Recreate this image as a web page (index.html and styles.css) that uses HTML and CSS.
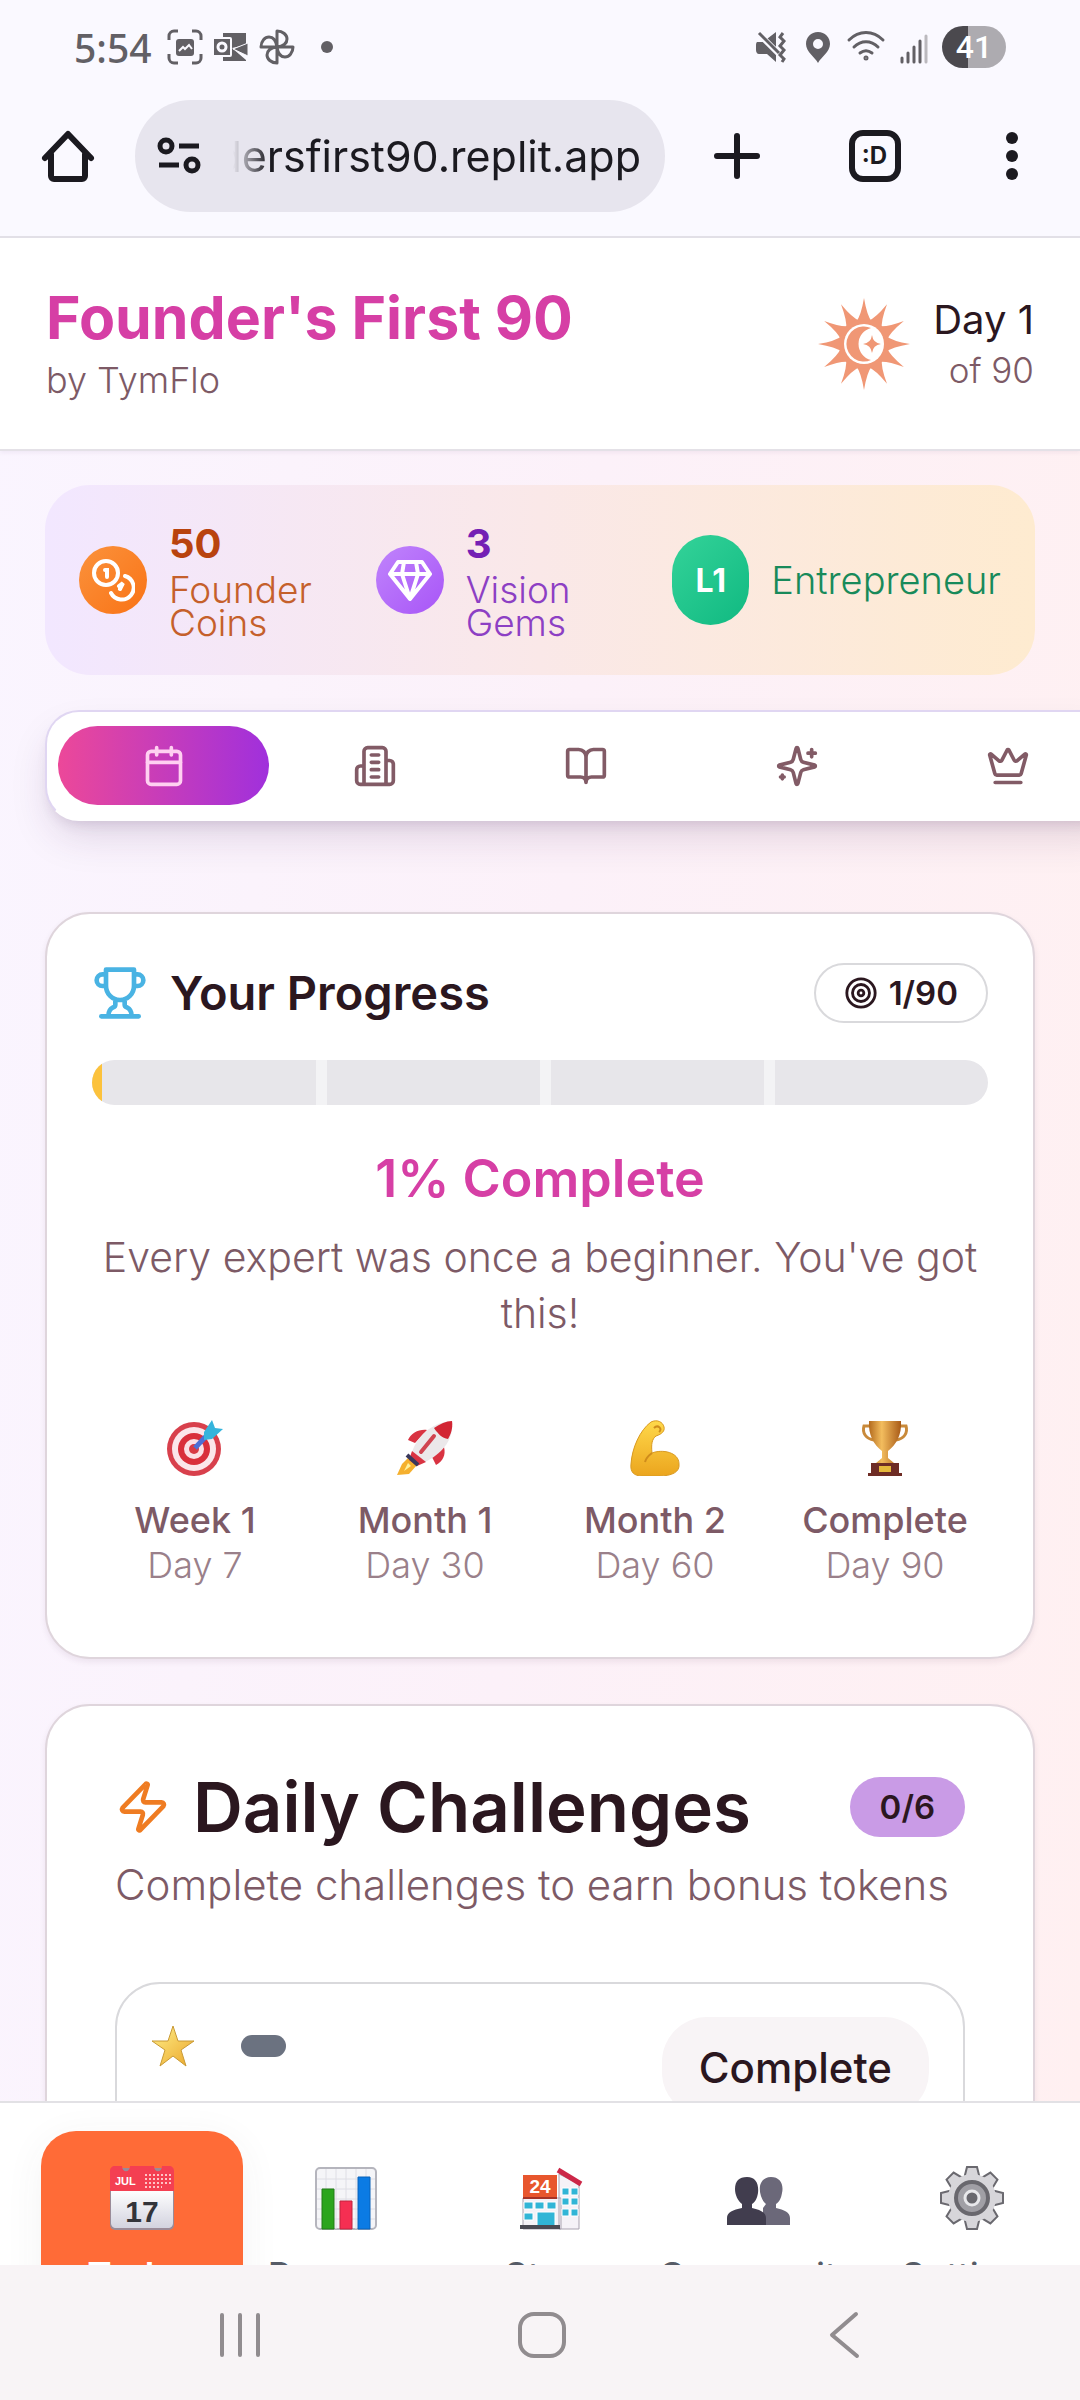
FILE: index.html
```html
<!DOCTYPE html>
<html lang="en">
<head>
<meta charset="utf-8">
<meta name="viewport" content="width=device-width, initial-scale=1">
<title>Founder's First 90</title>
<link rel="stylesheet" href="styles.css">
</head>
<body>
<div class="device">
  <div class="status">
    <div class="status-side">
      <span class="clock">5:54</span>
      <svg class="s-icon" viewBox="0 0 36 36" fill="none" stroke="#626065" stroke-width="3"><path d="M2 11V7a5 5 0 0 1 5-5h4M25 2h4a5 5 0 0 1 5 5v4M34 25v4a5 5 0 0 1-5 5h-4M11 34H7a5 5 0 0 1-5-5v-4"/><rect x="9" y="10" width="18" height="17" rx="3" fill="#626065" stroke="none"/><path d="m12 22 4-4 2 2 4-4 3 4" stroke="#faf9ff" stroke-width="2"/></svg>
      <svg class="s-icon" viewBox="0 0 36 36" fill="#626065"><path d="M10 4h23v12l-14 3 14 12v1H10z"/><path d="m20 20 15-6v13z" stroke="#faf9ff" stroke-width="1"/><rect x="0" y="9" width="18" height="18" rx="1" stroke="#faf9ff" stroke-width="2"/><circle cx="9" cy="18" r="4" fill="none" stroke="#faf9ff" stroke-width="3"/></svg>
      <svg class="s-icon" viewBox="0 0 36 36" fill="none" stroke="#626065" stroke-width="3" stroke-linejoin="round"><path d="M18 18V2c6 0 10 4 10 8s-3 7-10 8h16c0 6-4 10-8 10s-7-3-8-10v16c-6 0-10-4-10-8s3-7 10-8H2c0-6 4-10 8-10s7 3 8 10z"/></svg>
      <span class="dot"></span>
    </div>
    <div class="status-side">
      <svg class="s-icon" viewBox="0 0 36 36"><path fill="#626065" d="M3 13h6l13-10v30l-9-8H5c-2 0-3-2-3-4v-4c0-2 0-3 1-4z"/><path d="m3 3 24 24" stroke="#faf9ff" stroke-width="6"/><path d="m5 4 20 20M29 4l-3 4 4 4-4 5 4 4-4 5 4 4-2 3" fill="none" stroke="#626065" stroke-width="3"/></svg>
      <svg class="s-icon" viewBox="0 0 36 36"><path fill="#626065" fill-rule="evenodd" d="M18 3c7 0 12 5 12 12 0 8-9 13-12 19C15 28 6 23 6 15 6 8 11 3 18 3zm0 7a5 5 0 1 0 0 10 5 5 0 0 0 0-10z"/></svg>
      <svg class="s-icon wide" viewBox="0 0 40 36" fill="none" stroke="#626065" stroke-width="3" stroke-linecap="round"><path d="M3 11c10-10 24-10 34 0M8 18c7-7 17-7 24 0M14 24c4-3 8-3 12 0"/><circle cx="20" cy="29" r="1"/></svg>
      <svg class="s-icon" viewBox="0 0 36 36" stroke="#626065" stroke-width="3" stroke-linecap="round"><path d="M6 29v4M12 24v9M18 18v15M24 12v21"/><path d="M30 7v26" stroke="#bbb9be"/></svg>
      <span class="battery">41</span>
    </div>
  </div>
  <div class="toolbar">
    <button class="bar-btn" aria-label="Home"><svg viewBox="0 0 56 56" fill="none" stroke="#1b1a20" stroke-width="6" stroke-linecap="round" stroke-linejoin="round"><path d="M5 30 28 6l23 24M11 26v22a3 3 0 0 0 3 3h28a3 3 0 0 0 3-3V26"/></svg></button>
    <div class="address">
      <svg viewBox="0 0 44 40" fill="none" stroke="#1b1a20" stroke-width="5"><circle cx="9" cy="10" r="6"/><path d="M22 10h20M2 29h20"/><circle cx="35" cy="29" r="6"/></svg>
      <input class="url" aria-label="Address" value="dersfirst90.replit.app" readonly>
    </div>
    <div class="bar-actions">
      <button class="bar-btn" aria-label="New tab"><svg viewBox="0 0 56 56" stroke="#1b1a20" stroke-width="6" stroke-linecap="round"><path d="M28 8v40M8 28h40"/></svg></button>
      <button class="bar-btn" aria-label="Tabs"><span class="tab-count">:D</span></button>
      <button class="bar-btn" aria-label="Menu"><svg viewBox="0 0 56 56" fill="#1b1a20"><circle cx="28" cy="10" r="6"/><circle cx="28" cy="28" r="6"/><circle cx="28" cy="46" r="6"/></svg></button>
    </div>
  </div>

  <div class="app">
    <header class="header">
      <div class="titles">
        <h1 class="brand">Founder's First 90</h1>
        <p class="byline">by TymFlo</p>
      </div>
      <div class="day">
        <svg class="sun" viewBox="-46 -46 92 92" fill="#f09775">
          <g id="ray4"><path id="ray" d="M-8-22Q-3-28 0-46 3-28 8-22z"/><use href="#ray" transform="rotate(30)"/><use href="#ray" transform="rotate(60)"/></g>
          <use href="#ray4" transform="rotate(90)"/><use href="#ray4" transform="rotate(180)"/><use href="#ray4" transform="rotate(270)"/>
          <circle r="25"/><circle r="20" fill="#fff"/>
          <path d="M7-16A17.500 17.500 0 1 0 7 16 16.500 16.500 0 0 1 7-16z"/>
          <path d="M8-9Q9-1 17 0 9 1 8 9 7 1-1 0 7-1 8-9z"/>
        </svg>
        <div class="day-text"><p class="day-now">Day 1</p><p class="day-of">of 90</p></div>
      </div>
    </header>

    <main class="content">
      <section class="stats" aria-label="Rewards">
        <div class="stat coins">
          <span class="stat-icon"><svg viewBox="0 0 44 44" fill="none" stroke="#fff" stroke-width="4" stroke-linecap="round"><circle cx="15" cy="15" r="12"/><path d="M14 12h2v7M34 18a12 12 0 1 1-14 17M28 28l4-3-3 6"/></svg></span>
          <div><p class="stat-num">50</p><p class="stat-label">Founder<br>Coins</p></div>
        </div>
        <div class="stat gems">
          <span class="stat-icon"><svg viewBox="0 0 44 44" fill="none" stroke="#fff" stroke-width="4" stroke-linejoin="round"><path d="M10 4h24l8 12-20 25L2 16zM2 16h40M16 4l-2 12 8 25 8-25-2-12"/></svg></span>
          <div><p class="stat-num">3</p><p class="stat-label">Vision<br>Gems</p></div>
        </div>
        <div class="stat level"><span class="level-badge">L1</span><p class="stat-label">Entrepreneur</p></div>
      </section>

      <nav class="tabs" aria-label="Sections">
        <button class="tab active" aria-label="Calendar"><svg viewBox="0 0 24 24"><path d="M8 2v4M16 2v4M3 10h18"/><rect x="3" y="4" width="18" height="18" rx="2"/></svg></button>
        <button class="tab" aria-label="Business"><svg viewBox="0 0 24 24"><path d="M6 22V4a2 2 0 0 1 2-2h8a2 2 0 0 1 2 2v18ZM6 12H4a2 2 0 0 0-2 2v6a2 2 0 0 0 2 2h2M18 9h2a2 2 0 0 1 2 2v9a2 2 0 0 1-2 2h-2M10 6h4M10 10h4M10 14h4M10 18h4"/></svg></button>
        <button class="tab" aria-label="Library"><svg viewBox="0 0 24 24"><path d="M12 7v14M3 18a1 1 0 0 1-1-1V4a1 1 0 0 1 1-1h5a4 4 0 0 1 4 4 4 4 0 0 1 4-4h5a1 1 0 0 1 1 1v13a1 1 0 0 1-1 1h-6a3 3 0 0 0-3 3 3 3 0 0 0-3-3z"/></svg></button>
        <button class="tab" aria-label="Inspiration"><svg viewBox="0 0 24 24"><path d="M9.937 15.5A2 2 0 0 0 8.5 14.063l-6.135-1.582a.5.5 0 0 1 0-.962L8.5 9.936A2 2 0 0 0 9.937 8.5l1.582-6.135a.5.5 0 0 1 .963 0L14.063 8.5A2 2 0 0 0 15.5 9.937l6.135 1.581a.5.5 0 0 1 0 .964L15.5 14.063a2 2 0 0 0-1.437 1.437l-1.582 6.135a.5.5 0 0 1-.963 0zM20 3v4M22 5h-4M4 17v2M5 18H3"/></svg></button>
        <button class="tab" aria-label="Premium"><svg viewBox="0 0 24 24"><path d="M11.562 3.266a.5.5 0 0 1 .876 0L15.39 8.87a1 1 0 0 0 1.516.294L21.183 5.5a.5.5 0 0 1 .798.519l-2.834 10.246a1 1 0 0 1-.956.734H5.81a1 1 0 0 1-.957-.734L2.02 6.02a.5.5 0 0 1 .798-.519l4.276 3.664a1 1 0 0 0 1.516-.294zM5 21h14"/></svg></button>
      </nav>

      <section class="card progress">
        <div class="row">
          <div class="heading">
            <svg class="line-icon blue" viewBox="0 0 24 24"><path d="M6 9H4.5a2.5 2.5 0 0 1 0-5H6M18 9h1.5a2.5 2.5 0 0 0 0-5H18M4 22h16M10 14.66V17c0 .55-.47.98-.97 1.21C7.85 18.75 7 20.24 7 22M14 14.66V17c0 .55.47.98.97 1.21C16.15 18.75 17 20.24 17 22M18 2H6v7a6 6 0 0 0 12 0V2Z"/></svg>
            <h2 class="title">Your Progress</h2>
          </div>
          <span class="pill outline"><svg viewBox="0 0 24 24"><circle cx="12" cy="12" r="10"/><circle cx="12" cy="12" r="6"/><circle cx="12" cy="12" r="2"/></svg>1/90</span>
        </div>
        <div class="track" role="progressbar" aria-valuenow="1" aria-valuemin="0" aria-valuemax="100" aria-label="Progress"><span class="fill" style="width:1%"></span><i></i><i></i><i></i><i></i></div>
        <p class="percent">1% Complete</p>
        <p class="quote">Every expert was once a beginner. You've got this!</p>
        <ul class="milestones">
          <li>
            <svg class="emoji" viewBox="0 0 56 56"><circle cx="27" cy="29" r="27" fill="#d8404c"/><circle cx="27" cy="29" r="22" fill="#fbe6ea"/><circle cx="27" cy="29" r="16" fill="#d92f3b"/><circle cx="27" cy="29" r="10" fill="#fbe0e5"/><circle cx="27" cy="29" r="5" fill="#d83a45"/><path d="m28 28 15-16" stroke="#4b6fd6" stroke-width="5"/><path fill="#35b4dc" d="m37 12 8-12 3 8 8 1-11 10-8 1z"/></svg>
            <strong>Week 1</strong><span>Day 7</span>
          </li>
          <li>
            <svg class="emoji" viewBox="0 0 56 56"><path fill="#f5b02e" d="m12 37-7 7-5 11 12-1 8-9z"/><path fill="#fff19c" d="m11 43-4 8 7-5z"/><path fill="#d93342" d="M11 20c3-7 11-11 19-10L18 23zM47 27c2 8-1 14-8 18l-4-8z"/><path fill="#ebe8ea" d="M15 32C20 17 33 3 55 1c2 18-9 32-27 41z"/><path fill="#d22634" d="M37 8C43 4 49 1 55 1c1 7-1 13-4 18-6-1-10-5-14-11z"/><path fill="#d93342" d="m15 31 14 11-9 4-8-6z"/><path d="m24 32 13-16" stroke="#d04450" stroke-width="4" stroke-linecap="round"/><path d="m10 35 11 10" stroke="#39385c" stroke-width="4"/></svg>
            <strong>Month 1</strong><span>Day 30</span>
          </li>
          <li>
            <svg class="emoji" viewBox="0 0 56 56"><defs><linearGradient id="skin" x2="0" y2="1"><stop stop-color="#ffd84a"/><stop offset="1" stop-color="#eba51e"/></linearGradient></defs><path fill="url(#skin)" stroke="#d99a22" d="M24 2c6-3 12 0 13 5 1 4-2 7-8 9-4 3-5 8-4 17 10-4 27-1 27 11 1 8-7 12-20 12H15c-8 0-12-4-11-12C5 28 13 10 24 2z"/><path fill="none" stroke="#cf8c1b" stroke-width="2" d="M25 33c-4 3-6 5-7 9M27 8c4-4 9 1 5 4"/></svg>
            <strong>Month 2</strong><span>Day 60</span>
          </li>
          <li>
            <svg class="emoji" viewBox="0 0 56 56"><defs><linearGradient id="cup"><stop stop-color="#b36a1d"/><stop offset=".4" stop-color="#f3bd5e"/><stop offset="1" stop-color="#a85a17"/></linearGradient></defs><path fill="none" stroke="#c98a3a" stroke-width="3" d="M14 6H7c-2 7 2 13 10 14M42 6h7c2 7-2 13-10 14"/><path fill="url(#cup)" d="M12 1h32c1 14-5 24-13 30v7l6 5H19l6-5v-7C17 25 11 15 12 1z"/><path fill="#6e2c25" d="M14 43h28v10h3v3H11v-3h3z"/><path fill="#e5b83b" d="M22 46h12v6H22z"/></svg>
            <strong>Complete</strong><span>Day 90</span>
          </li>
        </ul>
      </section>

      <section class="card challenges">
        <div class="row">
          <div class="heading">
            <svg class="line-icon orange" viewBox="0 0 24 24"><path d="M4 14a1 1 0 0 1-.78-1.63l9.9-10.2a.5.5 0 0 1 .86.46l-1.92 6.02A1 1 0 0 0 13 10h7a1 1 0 0 1 .78 1.63l-9.9 10.2a.5.5 0 0 1-.86-.46l1.92-6.02A1 1 0 0 0 11 14z"/></svg>
            <h2 class="title big">Daily Challenges</h2>
          </div>
          <span class="pill filled">0/6</span>
        </div>
        <p class="subtitle">Complete challenges to earn bonus tokens</p>
        <div class="challenge">
          <div class="marks">
            <svg class="star" viewBox="0 0 44 42"><defs><linearGradient id="gold" x2="1" y2="1"><stop stop-color="#fff08a"/><stop offset="1" stop-color="#eba62a"/></linearGradient></defs><path fill="url(#gold)" stroke="#c99a35" stroke-linejoin="round" d="m22 1 5 15h16L30 25l5 16-13-10L9 41l5-16L1 16h16z"/></svg>
            <span class="tag"></span>
          </div>
          <button class="complete">Complete</button>
        </div>
      </section>
    </main>
  </div>

  <nav class="bottom" aria-label="Main">
    <a class="dest current" href="#today"><svg viewBox="0 0 64 64"><defs><linearGradient id="page" x2="0" y2="1"><stop stop-color="#fff"/><stop offset="1" stop-color="#d3d3df"/></linearGradient></defs><rect y="2" width="64" height="62" rx="5" fill="#9a8b98"/><path fill="url(#page)" d="M1 24h62v33c0 3-2 5-5 5H6c-3 0-5-2-5-5z"/><path fill="#f43f52" d="M0 25V5c0-3 2-5 5-5h7c0 7 8 7 8 0h24c0 7 8 7 8 0h7c3 0 5 2 5 5v20z"/><path d="M35 9h26M35 13h26M35 17h26M35 21h17" stroke="#ffc3c6" stroke-width="2" stroke-dasharray="2 2"/><text x="5" y="19" font-size="11" font-weight="700" fill="#fff">JUL</text><text x="32" y="56" font-size="30" font-weight="700" text-anchor="middle" fill="#33343a">17</text></svg><span>Today</span></a>
    <a class="dest" href="#progress"><svg viewBox="0 0 64 64"><rect x="2" y="2" width="60" height="61" rx="4" fill="#f5f5f8" stroke="#b5b5bd" stroke-width="2"/><path d="M12 3v60M22 3v60M32 3v60M42 3v60M52 3v60M3 13h58M3 23h58M3 33h58M3 43h58M3 53h58" stroke="#dedee5"/><path fill="#2ca51d" stroke="#237a19" d="M8 23h12v40H8z"/><path fill="#f52f52" stroke="#c0243f" d="M26 35h12v28H26z"/><path fill="#0b7be4" stroke="#0a62b8" d="M44 11h12v52H44z"/></svg><span>Progress</span></a>
    <a class="dest" href="#store"><svg viewBox="0 0 64 64"><path fill="#f5f2f7" stroke="#a9a3b0" d="M4 32h38v31H4zM40 8l20 10v45H40z"/><path d="m39 4 23 14" stroke="#cc2748" stroke-width="5"/><path fill="#e8562d" d="M4 9h34v22H4z"/><text x="21" y="27" font-size="19" font-weight="700" text-anchor="middle" fill="#fff">24</text><path d="M4 32h34" stroke="#a63327" stroke-width="2"/><path fill="#31b5d6" stroke="#fff" stroke-width="1" d="M5 36h9v7H5zM16 36h9v7h-9zM28 36h9v7h-9zM5 47h9v7H5zM18 46h18v15H18zM43 22h7v7h-7zM52 22h7v7h-7zM43 32h7v7h-7zM52 32h7v7h-7zM43 43h7v7h-7zM52 43h7v7h-7z"/><path fill="#4a4a53" d="M1 59h40v4H1z"/></svg><span>Store</span></a>
    <a class="dest" href="#community"><svg viewBox="0 0 64 64"><path fill="#6b6879" d="M44 11c9 0 13 7 11 16-1 6-3 9-6 11v4c8 2 14 4 14 10v7H36V42l3-4c-4-3-7-11-6-18 1-5 5-9 11-9z"/><path fill="#413d4e" d="M20 11c9 0 12 7 11 16-1 6-3 9-6 11v4c8 2 14 4 14 10v7H0v-7c0-6 6-8 15-10v-4c-4-3-7-9-7-15 0-8 4-12 12-12z"/></svg><span>Community</span></a>
    <a class="dest" href="#settings"><svg viewBox="-32 -32 64 64"><g fill="#d7d6da" stroke="#6a696f" stroke-width="2"><g id="teeth"><path id="tooth" d="m-7-23 2-8H5l2 8v46l-2 8H-5l-2-8z"/><use href="#tooth" transform="rotate(90)"/></g><use href="#teeth" transform="rotate(45)"/></g><circle r="24" fill="#d7d6da"/><circle r="16" fill="#a09fa5" stroke="#69686e" stroke-width="4"/><circle r="7" fill="#69686e" stroke="#e8e8eb" stroke-width="3"/></svg><span>Settings</span></a>
  </nav>
  <div class="system">
    <button aria-label="Recent apps"><svg viewBox="0 0 48 48"><path d="M6 4v40M24 4v40M42 4v40"/></svg></button>
    <button aria-label="Home screen"><svg viewBox="0 0 48 48"><rect x="2" y="3" width="44" height="42" rx="14"/></svg></button>
    <button aria-label="Back"><svg viewBox="0 0 48 48"><path d="M36 3 12 24l25 21"/></svg></button>
  </div>
</div>
</body>
</html>
```
FILE: styles.css
```css
* { box-sizing: border-box; }
body, h1, h2, p, ul { margin: 0; padding: 0; }
body { font-family: Inter, "Liberation Sans", sans-serif; font-weight: 300; color: #2b171f; }
button { border: 0; padding: 0; background: none; font: inherit; color: inherit; }
svg { display: block; flex: none; }

.device { height: 100vh; display: flex; flex-direction: column; overflow: hidden; }

/* Phone status bar */
.status { flex: none; height: 92px; padding: 2px 74px 0; display: flex; justify-content: space-between; align-items: center; background: #faf9ff; }
.status-side { display: flex; align-items: center; gap: 10px; }
.clock { font-family: "Noto Sans", sans-serif; font-size: 39px; font-weight: 500; color: #626065; margin-right: 5px; }
.s-icon { width: 36px; height: 36px; }
.s-icon.wide { width: 40px; }
.dot { width: 12px; height: 12px; border-radius: 50%; background: #626065; margin-left: 16px; }
.battery { width: 64px; height: 42px; border-radius: 21px; background: linear-gradient(90deg, #4b494e 40%, #adabb0 40%); color: #fff; font: 500 32px/42px Roboto, sans-serif; text-align: center; }

/* Browser toolbar */
.toolbar { flex: none; height: 146px; padding: 0 40px 16px; display: flex; align-items: center; border-bottom: 2px solid #e2e0e7; background: #faf9ff; }
.bar-btn { width: 56px; height: 56px; flex: none; }
.bar-btn svg { width: 56px; height: 56px; }
.address { flex: none; width: 53%; height: 112px; margin-left: 39px; padding: 0 24px 0 22px; border-radius: 56px; background: #e7e5ee; display: flex; align-items: center; }
.address svg { width: 44px; height: 40px; }
.url { flex: 1; min-width: 0; border: 0; padding: 0; background: none; outline: 0; text-align: right; font: 400 43px/60px Inter, sans-serif; color: #1b1a20; mask-image: linear-gradient(90deg, transparent 32px, #000 68px); }
.bar-actions { flex: 1; margin-left: 44px; display: flex; justify-content: space-between; }
.tab-count { display: block; width: 52px; height: 52px; margin: 2px; border: 6px solid #1b1a20; border-radius: 14px; font: 700 24px/40px Inter, sans-serif; text-align: center; color: #1b1a20; }

/* App viewport */
.app { flex: 1; min-height: 0; overflow: hidden; background: linear-gradient(95deg, #faf5ff, #fcf1f9 50%, #fff0f1); }
.header { height: 213px; padding: 0 46px; border-bottom: 2px solid #e4e1e7; background: #fff; box-shadow: 0 2px 4px rgba(80, 40, 100, .06); display: flex; justify-content: space-between; align-items: center; }
.titles { padding-top: 4px; }
.brand { font-size: 59px; line-height: 68px; font-weight: 700; color: #d63fa5; }
.byline { font-size: 36px; line-height: 56px; color: #7d5a66; }
.day { display: flex; align-items: center; gap: 23px; }
.sun { width: 92px; height: 92px; }
.day-text { text-align: right; }
.day-now { font-size: 40px; line-height: 52px; font-weight: 400; }
.day-of { font-size: 35px; line-height: 48px; color: #7d5a66; }
.content { padding: 34px 45px 0; }

.stats { height: 190px; padding: 0 34px; border-radius: 45px; background: linear-gradient(90deg, #f2e7ff, #fae8e8 50%, #feebd0); display: grid; grid-template-columns: 13fr 13fr 14fr; align-items: center; }
.stat { display: flex; align-items: center; gap: 22px; }
.stat-icon { width: 68px; height: 68px; border-radius: 50%; padding: 12px; }
.stat-icon svg { width: 44px; height: 44px; }
.stat-num { font-size: 40px; line-height: 46px; font-weight: 700; margin-bottom: 6px; }
.stat-label { font-size: 37px; line-height: 33px; }
.coins .stat-icon { background: linear-gradient(135deg, #fb923c, #f97316); }
.coins .stat-num { color: #b9430e; }
.coins .stat-label { color: #c5602b; }
.gems .stat-icon { background: linear-gradient(135deg, #c084fc, #a855f7); }
.gems .stat-num { color: #7420b4; }
.gems .stat-label { color: #8d3fc4; }
.level { justify-self: end; }
.level-badge { width: 77px; height: 90px; border-radius: 39px; background: linear-gradient(135deg, #34d399, #10b981); color: #fff; font-size: 32px; line-height: 92px; font-weight: 700; text-align: center; }
.level .stat-label { font-size: 38px; color: #188a5a; }

.tabs { width: max-content; height: 111px; margin-top: 35px; padding: 0 11px; display: flex; align-items: center; border: 2px solid #e0d6f2; border-bottom-color: #fff; border-radius: 34px; background: #fff; box-shadow: 0 20px 40px -6px rgba(60, 30, 80, .15), 0 8px 14px -6px rgba(60, 30, 80, .15); }
.tab { width: 211px; height: 79px; display: grid; place-items: center; color: #825b66; border-radius: 40px; }
.tab svg { width: 44px; height: 44px; }
.tab.active { color: #ffd0f1; background: linear-gradient(90deg, #ec4899, #a030dc); }
.tab svg, .line-icon, .pill svg { fill: none; stroke: currentColor; stroke-width: 2; stroke-linecap: round; stroke-linejoin: round; }

.card { border: 2px solid #dfd5dc; border-radius: 45px; background: #fff; box-shadow: 0 3px 6px rgba(60, 30, 60, .08); }
.row, .heading { display: flex; align-items: center; }
.row { justify-content: space-between; }
.heading { gap: 22px; }
.line-icon { width: 56px; height: 56px; }
.blue { color: #49b3e3; }
.orange { color: #ef7c22; }
.title { font-size: 47px; line-height: 60px; font-weight: 600; }
.title.big { font-size: 69px; line-height: 80px; }
.pill { height: 60px; border-radius: 30px; font-size: 33px; font-weight: 600; display: flex; align-items: center; gap: 11px; }
.pill svg { width: 34px; height: 34px; }
.outline { padding: 0 28px; border: 2px solid #d9d9dc; }
.filled { padding: 0 30px; background: #c99be6; }

.progress { margin-top: 91px; height: 747px; padding: 49px 45px; }
.track { position: relative; display: grid; grid-template-columns: repeat(4, 1fr); height: 45px; margin-top: 37px; border-radius: 23px; overflow: hidden; background: #e7e6ea; }
.track i + i { border-left: 11px solid #f3f3f5; }
.fill { position: absolute; left: 0; top: 0; height: 100%; min-width: 10px; background: #fcc23c; }
.percent { margin-top: 42px; font-size: 52px; line-height: 64px; font-weight: 600; color: #d63fa5; text-align: center; }
.quote { margin-top: 18px; font-size: 41px; line-height: 56px; color: #7d5a66; text-align: center; }
.milestones { list-style: none; margin: 79px -12px 0; display: grid; grid-template-columns: repeat(4, 1fr); }
.milestones li { display: flex; flex-direction: column; align-items: center; font-size: 36px; line-height: 45px; color: #9a808a; }
.milestones strong { margin-top: 22px; font-weight: 500; color: #7d5a66; }
.emoji { width: 56px; height: 56px; }

.challenges { margin-top: 45px; padding: 61px 68px 0; }
.subtitle { margin-top: 10px; font-size: 42px; line-height: 56px; color: #7d5a66; white-space: nowrap; }
.challenge { margin-top: 69px; height: 300px; padding: 33px 34px; border: 2px solid #d9d9dc; border-radius: 45px; display: flex; justify-content: space-between; align-items: flex-start; }
.marks { display: flex; align-items: center; gap: 46px; margin-top: 8px; }
.star { width: 44px; height: 42px; }
.tag { width: 45px; height: 22px; border-radius: 11px; background: #6b7280; }
.complete { height: 100px; padding: 0 37px; border-radius: 45px; background: #f8f4f6; font-size: 42px; font-weight: 500; }

/* App navigation */
.bottom { position: relative; flex: none; height: 164px; padding: 28px 0 0 41px; overflow: hidden; border-top: 2px solid #e2e1e5; background: #fff; display: grid; grid-template-columns: 202fr 205fr 205fr 211fr 216fr; }
.dest { height: 190px; padding-top: 35px; display: flex; flex-direction: column; align-items: center; color: #565b66; font-size: 37px; line-height: 44px; font-weight: 400; text-decoration: none; }
.dest svg { width: 64px; height: 64px; margin-bottom: 24px; font-family: "Liberation Sans", sans-serif; }
.dest.current { border-radius: 35px; background: #ff6b37; color: #fff; font-weight: 600; box-shadow: 0 8px 40px rgba(60, 60, 60, .06); }

/* Phone navigation */
.system { flex: none; height: 135px; padding: 5px 0 0 4px; background: #f8f4f6; display: flex; justify-content: center; align-items: center; gap: 254px; }
.system svg { width: 48px; height: 48px; fill: none; stroke: #918c8f; stroke-width: 4; stroke-linecap: round; stroke-linejoin: round; }
```
